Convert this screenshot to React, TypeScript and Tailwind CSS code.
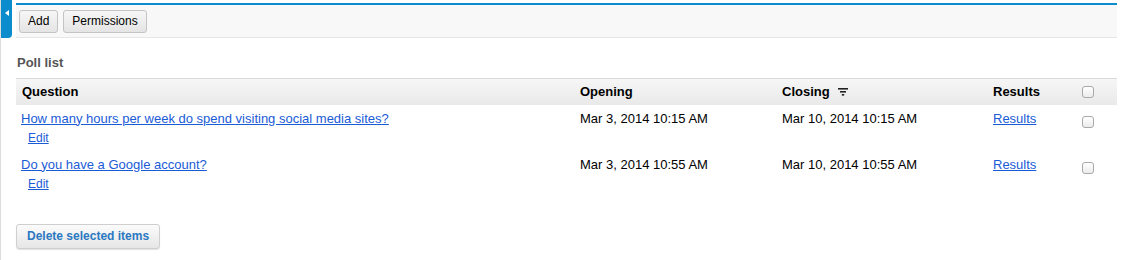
import React from "react";

const POLLS = [
  {
    id: 1,
    question: "How many hours per week do spend visiting social media sites?",
    opening: "Mar 3, 2014 10:15 AM",
    closing: "Mar 10, 2014 10:15 AM",
  },
  {
    id: 2,
    question: "Do you have a Google account?",
    opening: "Mar 3, 2014 10:55 AM",
    closing: "Mar 10, 2014 10:55 AM",
  },
];

const cols = "grid grid-cols-[558px_202px_211px_88px_1fr]";

function Checkbox() {
  return (
    <span className="inline-block w-[12px] h-[12px] rounded-[3px] border border-[#a9a9a9] bg-gradient-to-b from-white to-[#ececec] shadow-[inset_0_1px_0_#fff]" />
  );
}

function FilterIcon() {
  return (
    <svg width="10" height="8" viewBox="0 0 10 8" className="ml-[8px] mt-[1px]">
      <rect x="0" y="0" width="10" height="1.6" fill="#222" />
      <rect x="2" y="3" width="6" height="1.6" fill="#222" />
      <rect x="3.8" y="6" width="2.4" height="1.6" fill="#222" />
    </svg>
  );
}

function ToolButton({ children }: { children: React.ReactNode }) {
  return (
    <button className="h-[23px] px-[8px] text-[12px] text-black bg-gradient-to-b from-[#f7f7f7] to-[#e4e4e4] border border-[#c4c4c4] rounded-[3px]">
      {children}
    </button>
  );
}

export default function App() {
  return (
    <main className="flex min-h-[260px] bg-white font-['Liberation_Sans',Arial,sans-serif] text-[13px] text-black">
      {/* Side tab */}
      <div className="w-[16px] shrink-0 border-l border-[#dcdcdc]">
        <div className="w-[11px] h-[38px] bg-[#0b8ccd] rounded-br-[4px] flex items-center justify-center">
          <svg width="4" height="6" viewBox="0 0 4 6" className="-mt-[12px]">
            <path d="M4 0 L0 3 L4 6 Z" fill="#fff" />
          </svg>
        </div>
      </div>

      <div className="w-[1101px] shrink-0">
        {/* Toolbar */}
        <div className="mt-[3px] border-t-[2px] border-[#0b8ccd] bg-[#f8f8f8] border-b border-b-[#e6e6e6] h-[35px] flex items-center gap-[5px] px-[3px]">
          <ToolButton>Add</ToolButton>
          <ToolButton>Permissions</ToolButton>
        </div>

        <h2 className="mt-[15px] ml-[1px] text-[13px] font-bold text-[#555]">Poll list</h2>

        {/* Table */}
        <div className="mt-[5px]">
          <div className={`${cols} h-[27px] items-center border-t border-[#dadada] bg-gradient-to-b from-[#f6f6f6] to-[#e9e9e9] font-bold`}>
            <div className="pl-[6px]">Question</div>
            <div className="pl-[6px]">Opening</div>
            <div className="pl-[6px] flex items-center">
              Closing
              <FilterIcon />
            </div>
            <div className="pl-[6px]">Results</div>
            <div className="pl-[7px] flex items-center">
              <Checkbox />
            </div>
          </div>

          {POLLS.map((p) => (
            <div key={p.id} className={`${cols} h-[46px] pt-[6px]`}>
              <div className="pl-[5px]">
                <a href="#" className="block leading-[16px] text-[#1a5bd6] underline">
                  {p.question}
                </a>
                <a href="#" className="inline-block mt-[3px] ml-[7px] text-[12px] leading-[16px] text-[#1a5bd6] underline">
                  Edit
                </a>
              </div>
              <div className="pl-[6px] leading-[16px]">{p.opening}</div>
              <div className="pl-[6px] leading-[16px]">{p.closing}</div>
              <div className="pl-[6px] leading-[16px]">
                <a href="#" className="text-[#1a5bd6] underline">
                  Results
                </a>
              </div>
              <div className="pl-[7px] pt-[3px]">
                <Checkbox />
              </div>
            </div>
          ))}
        </div>

        <button className="mt-[27px] h-[25px] px-[10px] text-[12px] font-bold text-[#2a78c2] bg-gradient-to-b from-[#fbfbfb] to-[#e6e6e6] border border-[#cfcfcf] rounded-[3px] shadow-[0_1px_1px_rgba(0,0,0,0.12)]">
          Delete selected items
        </button>
      </div>
    </main>
  );
}
